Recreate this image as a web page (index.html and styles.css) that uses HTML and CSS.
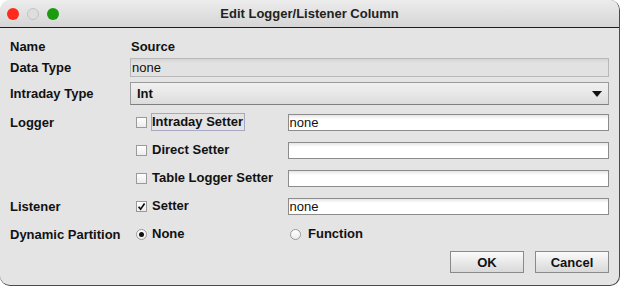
FILE: index.html
```html
<!DOCTYPE html>
<html lang="en">

<head>
    <meta charset="UTF-8">
    <title>Edit Logger/Listener Column</title>
    <link rel="stylesheet" href="styles.css">
</head>

<body>
    <div class="window">
        <div class="titlebar">
            <div class="lights">
                <span class="light red"></span>
                <span class="light idle"></span>
                <span class="light green"></span>
            </div>
            <div class="title">Edit Logger/Listener Column</div>
        </div>

        <div class="content">
            <div class="row row-name">
                <span class="label">Name</span>
                <span class="value">Source</span>
            </div>
            <div class="row row-type">
                <span class="label">Data Type</span>
                <div class="field field-off">none</div>
            </div>
            <div class="row row-combo">
                <span class="label">Intraday Type</span>
                <div class="combo"><span>Int</span><span class="arrow"></span></div>
            </div>

            <div class="row row-opt first">
                <span class="label">Logger</span>
                <div class="check"><span class="box"></span><span class="check-text focus">Intraday Setter</span></div>
                <div class="field">none</div>
            </div>
            <div class="row row-opt">
                <span class="label"></span>
                <div class="check"><span class="box"></span><span class="check-text">Direct Setter</span></div>
                <div class="field"></div>
            </div>
            <div class="row row-opt">
                <span class="label"></span>
                <div class="check"><span class="box"></span><span class="check-text">Table Logger Setter</span></div>
                <div class="field"></div>
            </div>
            <div class="row row-opt">
                <span class="label">Listener</span>
                <div class="check">
                    <span class="box">
                        <svg width="9" height="9" viewBox="0 0 9 9"><path d="M1.6 4.8 L3.6 7.2 L7.6 1.4" fill="none" stroke="#111" stroke-width="1.7"/></svg>
                    </span>
                    <span class="check-text">Setter</span>
                </div>
                <div class="field">none</div>
            </div>
            <div class="row row-opt">
                <span class="label">Dynamic Partition</span>
                <div class="radio"><span class="dot on"></span><span class="check-text">None</span></div>
                <div class="radio second"><span class="dot"></span><span class="check-text">Function</span></div>
            </div>

            <div class="buttons">
                <button class="btn">OK</button>
                <button class="btn">Cancel</button>
            </div>
        </div>
    </div>
</body>

</html>
```

FILE: styles.css
```css
body {
    margin: 0;
    background: #ffffff;
    font-family: "Liberation Sans", Arial, sans-serif;
    font-size: 13px;
    color: #111;
}

.window {
    width: 620px;
    height: 286px;
    box-sizing: border-box;
    background: #e4e4e4;
    border-right: 1px solid #4a4a4a;
    border-bottom: 1px solid #4a4a4a;
    border-radius: 10px;
    overflow: hidden;
}

.titlebar {
    height: 27px;
    border-bottom: 1px solid #1e1e1e;
    background: linear-gradient(#ececec, #d6d6d6);
    display: flex;
    align-items: center;
    position: relative;
}

.lights {
    display: flex;
    gap: 8px;
    padding-left: 7px;
    margin-top: 1px;
}

.light {
    width: 12px;
    height: 12px;
    border-radius: 50%;
    box-sizing: border-box;
}

.red {
    background: #fe2a1c;
}

.idle {
    border: 1px solid #c2c2c2;
    background: #dedede;
}

.green {
    background: #1c9a10;
}

.title {
    position: absolute;
    left: 0;
    right: 0;
    text-align: center;
    font-weight: bold;
    color: #222;
    line-height: 27px;
    pointer-events: none;
}

.content {
    padding: 9px 10px 0 10px;
}

.row {
    display: grid;
    grid-template-columns: 120px 157px 1fr;
    align-items: center;
    height: 18px;
}

.label,
.value,
.check-text {
    font-weight: bold;
}

.row-name .value {
    padding-left: 1px;
}

.row-type {
    height: 19px;
    margin-top: 3px;
}

.row-combo {
    height: 23px;
    margin-top: 5px;
}

.row-type .field,
.row-combo .combo {
    grid-column: 2 / 4;
}

.row-opt {
    margin-top: 10px;
}

.row-opt.first {
    margin-top: 8px;
}

.field {
    height: 17px;
    box-sizing: border-box;
    border: 1px solid #8c8c8c;
    background: linear-gradient(#e6e6e6, #ffffff 4px, #ffffff);
    padding-left: 1px;
    line-height: 15px;
    margin-left: 0.5px;
}

.field-off {
    height: 19px;
    line-height: 17px;
    border-color: #b8b8b8;
    background: linear-gradient(#d4d4d4, #e2e2e2 4px, #e2e2e2);
    margin-left: 0;
}

.combo {
    height: 23px;
    box-sizing: border-box;
    border: 1px solid #9a9a9a;
    border-bottom-color: #7e7e7e;
    background: linear-gradient(#f0f0f0, #e8e8e8 50%, #dcdcdc);
    display: flex;
    align-items: center;
    justify-content: space-between;
    padding: 0 6px 0 6px;
    font-weight: bold;
}

.arrow {
    width: 0;
    height: 0;
    border-left: 5px solid transparent;
    border-right: 5px solid transparent;
    border-top: 6px solid #111;
    margin-top: 1px;
}

.check,
.radio {
    display: flex;
    align-items: center;
}

.box {
    width: 11px;
    height: 11px;
    box-sizing: border-box;
    border: 1px solid #9a9a9a;
    background: linear-gradient(#ffffff, #ececec);
    margin-left: 6px;
    margin-right: 4px;
    display: flex;
    align-items: center;
    justify-content: center;
}

.check-text {
    border: 1px solid transparent;
    padding: 0 1px 0 0;
    line-height: 16px;
}

.check-text.focus {
    border-color: #a8a8c4;
}

.dot {
    width: 11px;
    height: 11px;
    box-sizing: border-box;
    border: 1px solid #9a9a9a;
    border-radius: 50%;
    background: linear-gradient(#ffffff, #ececec);
    margin-left: 6px;
    margin-right: 4px;
    display: flex;
    align-items: center;
    justify-content: center;
}

.dot.on::after {
    content: "";
    width: 5px;
    height: 5px;
    border-radius: 50%;
    background: #111;
}

.radio.second .dot {
    margin-left: 3px;
    margin-right: 6px;
}

.buttons {
    display: flex;
    justify-content: flex-end;
    gap: 11px;
    margin-top: 8px;
}

.btn {
    width: 74px;
    height: 22px;
    border: 1px solid #8a8a8a;
    background: linear-gradient(#fbfbfb, #e6e6e6 60%, #d9d9d9);
    font-family: "Liberation Sans", Arial, sans-serif;
    font-size: 13px;
    font-weight: bold;
    color: #111;
    padding: 0;
    margin: 0;
}
```
